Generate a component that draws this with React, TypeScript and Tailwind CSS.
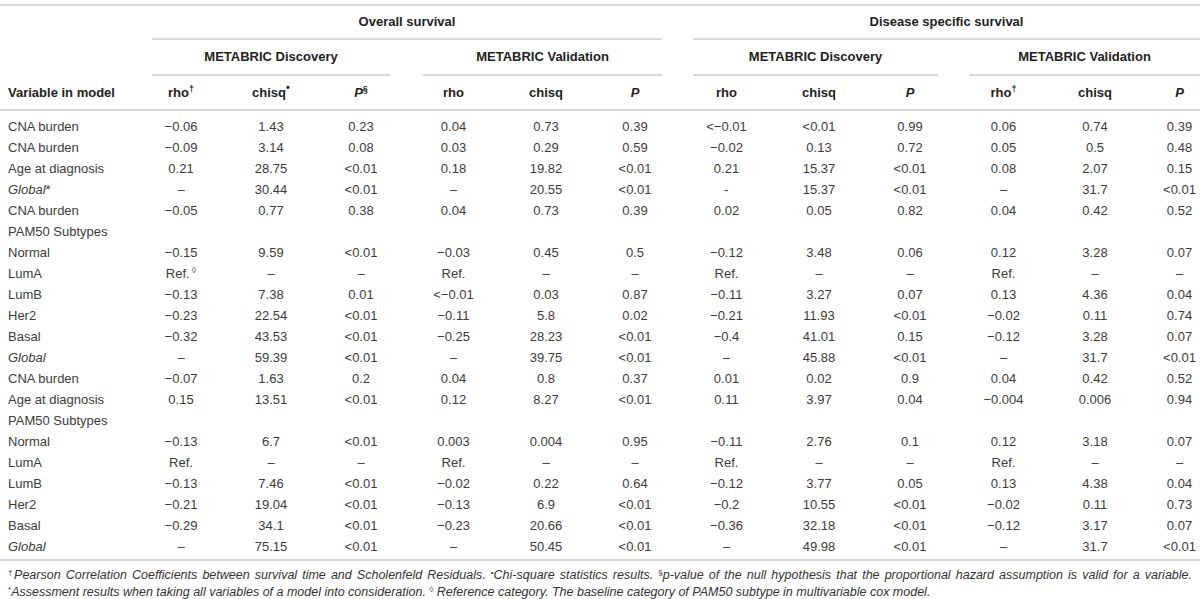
import type { ReactNode } from 'react';

// column grid shared by every row of the table
const cols = 'grid grid-cols-[136px_90px_90px_90px_95px_90px_88px_95px_90px_92px_95px_88px_1fr]';
const line = 'h-[2px] bg-[#d9d9d9]';
const supCls = 'text-[9px] leading-[0]';
const noteSup = 'not-italic text-[8px] leading-[0]';

type Row = { label: ReactNode; values?: ReactNode[] };

const ref = (
    <>
        Ref.<sup className="text-[9px] leading-[0] ml-[2px]">◊</sup>
    </>
);

const rows: Row[] = [
    { label: 'CNA burden', values: ['−0.06', '1.43', '0.23', '0.04', '0.73', '0.39', '<−0.01', '<0.01', '0.99', '0.06', '0.74', '0.39'] },
    { label: 'CNA burden', values: ['−0.09', '3.14', '0.08', '0.03', '0.29', '0.59', '−0.02', '0.13', '0.72', '0.05', '0.5', '0.48'] },
    { label: 'Age at diagnosis', values: ['0.21', '28.75', '<0.01', '0.18', '19.82', '<0.01', '0.21', '15.37', '<0.01', '0.08', '2.07', '0.15'] },
    {
        label: (
            <>
                <i>Global</i>*
            </>
        ),
        values: ['–', '30.44', '<0.01', '–', '20.55', '<0.01', '-', '15.37', '<0.01', '–', '31.7', '<0.01'],
    },
    { label: 'CNA burden', values: ['−0.05', '0.77', '0.38', '0.04', '0.73', '0.39', '0.02', '0.05', '0.82', '0.04', '0.42', '0.52'] },
    { label: 'PAM50 Subtypes' },
    { label: 'Normal', values: ['−0.15', '9.59', '<0.01', '−0.03', '0.45', '0.5', '−0.12', '3.48', '0.06', '0.12', '3.28', '0.07'] },
    { label: 'LumA', values: [ref, '–', '–', 'Ref.', '–', '–', 'Ref.', '–', '–', 'Ref.', '–', '–'] },
    { label: 'LumB', values: ['−0.13', '7.38', '0.01', '<−0.01', '0.03', '0.87', '−0.11', '3.27', '0.07', '0.13', '4.36', '0.04'] },
    { label: 'Her2', values: ['−0.23', '22.54', '<0.01', '−0.11', '5.8', '0.02', '−0.21', '11.93', '<0.01', '−0.02', '0.11', '0.74'] },
    { label: 'Basal', values: ['−0.32', '43.53', '<0.01', '−0.25', '28.23', '<0.01', '−0.4', '41.01', '0.15', '−0.12', '3.28', '0.07'] },
    { label: <i>Global</i>, values: ['–', '59.39', '<0.01', '–', '39.75', '<0.01', '–', '45.88', '<0.01', '–', '31.7', '<0.01'] },
    { label: 'CNA burden', values: ['−0.07', '1.63', '0.2', '0.04', '0.8', '0.37', '0.01', '0.02', '0.9', '0.04', '0.42', '0.52'] },
    { label: 'Age at diagnosis', values: ['0.15', '13.51', '<0.01', '0.12', '8.27', '<0.01', '0.11', '3.97', '0.04', '−0.004', '0.006', '0.94'] },
    { label: 'PAM50 Subtypes' },
    { label: 'Normal', values: ['−0.13', '6.7', '<0.01', '0.003', '0.004', '0.95', '−0.11', '2.76', '0.1', '0.12', '3.18', '0.07'] },
    { label: 'LumA', values: ['Ref.', '–', '–', 'Ref.', '–', '–', 'Ref.', '–', '–', 'Ref.', '–', '–'] },
    { label: 'LumB', values: ['−0.13', '7.46', '<0.01', '−0.02', '0.22', '0.64', '−0.12', '3.77', '0.05', '0.13', '4.38', '0.04'] },
    { label: 'Her2', values: ['−0.21', '19.04', '<0.01', '−0.13', '6.9', '<0.01', '−0.2', '10.55', '<0.01', '−0.02', '0.11', '0.73'] },
    { label: 'Basal', values: ['−0.29', '34.1', '<0.01', '−0.23', '20.66', '<0.01', '−0.36', '32.18', '<0.01', '−0.12', '3.17', '0.07'] },
    { label: <i>Global</i>, values: ['–', '75.15', '<0.01', '–', '50.45', '<0.01', '–', '49.98', '<0.01', '–', '31.7', '<0.01'] },
];

function GroupHead({ children, span, inset }: { children: ReactNode; span: string; inset: string }) {
    return (
        <div className={`${span} flex flex-col`}>
            <div className={`${inset} flex-1 flex items-center justify-center`}>{children}</div>
            <div className={`${inset} ${line}`} />
        </div>
    );
}

const subCols: ReactNode[] = [
    <>rho<sup className={supCls}>†</sup></>,
    <>chisq<sup className="text-[11px] leading-[0]">•</sup></>,
    <><i>P</i><sup className={supCls}>§</sup></>,
    'rho',
    'chisq',
    <i>P</i>,
    'rho',
    'chisq',
    <i>P</i>,
    <>rho<sup className={supCls}>†</sup></>,
    'chisq',
    <i>P</i>,
];

export default function App() {
    return (
        <div className="w-[1200px] h-[599px] overflow-hidden bg-white pt-[4px] text-[13px] text-[#3b3b3b] font-['Liberation_Sans','Arial',sans-serif]">
            <div className={line} />

            {/* header */}
            <div className="font-bold text-[#222]">
                <div className={`${cols} h-[34px]`}>
                    <div />
                    <GroupHead span="col-span-6" inset="ml-[16px] mr-[17px]">Overall survival</GroupHead>
                    <GroupHead span="col-span-6" inset="ml-[14px] mr-0">Disease specific survival</GroupHead>
                </div>
                <div className={`${cols} h-[36px]`}>
                    <div />
                    <GroupHead span="col-span-3" inset="ml-[16px] mr-[16px]">METABRIC Discovery</GroupHead>
                    <GroupHead span="col-span-3" inset="ml-[17px] mr-[17px]">METABRIC Validation</GroupHead>
                    <GroupHead span="col-span-3" inset="ml-[14px] mr-[18px]">METABRIC Discovery</GroupHead>
                    <GroupHead span="col-span-3" inset="ml-[13px] mr-0">METABRIC Validation</GroupHead>
                </div>
                <div className={`${cols} h-[33px] items-center`}>
                    <div className="pl-[8px]">Variable in model</div>
                    {subCols.map((c, i) => (
                        <div key={i} className={i === 11 ? 'text-center pl-[20px]' : 'text-center'}>
                            {c}
                        </div>
                    ))}
                </div>
            </div>
            <div className={line} />

            {/* body */}
            <div className="pt-[5px] pb-[2px]">
                {rows.map((r, ri) => (
                    <div key={ri} className={`${cols} h-[21px] items-center`}>
                        <div className="pl-[8px] whitespace-nowrap">{r.label}</div>
                        {r.values?.map((v, i) => (
                            <div key={i} className={i === 11 ? 'text-center pl-[20px] whitespace-nowrap' : 'text-center whitespace-nowrap'}>
                                {v}
                            </div>
                        ))}
                    </div>
                ))}
            </div>
            <div className={line} />

            {/* footnotes */}
            <div className="pt-[6px] px-[8px] text-[12.5px] leading-[17px] italic text-[#333]">
                <div className="text-justify [text-align-last:justify] whitespace-nowrap">
                    <sup className={noteSup}>†</sup>Pearson Correlation Coefficients between survival time and Scholenfeld Residuals.{' '}
                    <sup className={noteSup}>•</sup>Chi-square statistics results.{' '}
                    <sup className={noteSup}>§</sup>p-value of the null hypothesis that the proportional hazard assumption is valid for a variable.
                </div>
                <div className="whitespace-nowrap">
                    <sup className={noteSup}>*</sup>Assessment results when taking all variables of a model into consideration.{' '}
                    <sup className={noteSup}>◊</sup> Reference category. The baseline category of PAM50 subtype in multivariable cox model.
                </div>
            </div>
        </div>
    );
}
